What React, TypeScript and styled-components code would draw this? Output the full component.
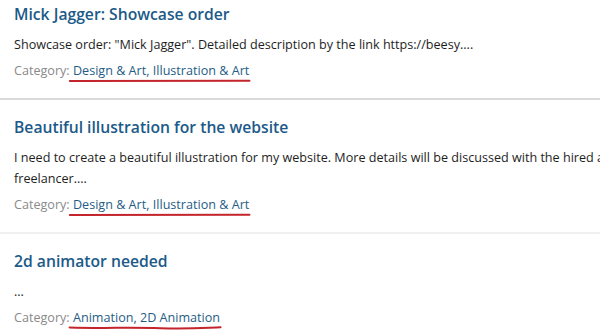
import styled, { createGlobalStyle } from 'styled-components';

const GlobalStyle = createGlobalStyle`
  html, body {
    margin: 0;
    padding: 0;
    background: #fff;
    overflow: hidden;
  }
  body {
    font-family: "Open Sans", "Liberation Sans", sans-serif;
  }
`;

type Order = {
  title: string;
  text: string;
  categories: string;
  wavy?: boolean;
};

const orders: Order[] = [
  {
    title: 'Mick Jagger: Showcase order',
    text: 'Showcase order: "Mick Jagger". Detailed description by the link https://beesy....',
    categories: 'Design & Art, Illustration & Art',
  },
  {
    title: 'Beautiful illustration for the website',
    text: 'I need to create a beautiful illustration for my website. More details will be discussed with the hired a freelancer....',
    categories: 'Design & Art, Illustration & Art',
  },
  {
    title: '2d animator needed',
    text: '...',
    categories: 'Animation, 2D Animation ',
    wavy: true,
  },
];

export default function App() {
  return (
    <>
      <GlobalStyle />
      <Page>
        <List>
          {orders.map((order, index) => (
            <Card key={order.title} $soft={index > 0}>
              <Title>{order.title}</Title>
              <Text>{order.text}</Text>
              <Meta>
                Category:{' '}
                <CategoryLink href="#">
                  {order.categories}
                  <Scribble viewBox="0 0 100 4" preserveAspectRatio="none">
                    <path
                      d={
                        order.wavy
                          ? 'M1 1.4 C 20 2.6, 40 1.2, 60 2.2 S 90 1.6, 99 1.2'
                          : 'M1 2 C 30 2.4, 60 2.2, 99 1.8'
                      }
                      stroke="#c4242b"
                      strokeWidth="2"
                      fill="none"
                      vectorEffect="non-scaling-stroke"
                      strokeLinecap="round"
                    />
                  </Scribble>
                </CategoryLink>
              </Meta>
            </Card>
          ))}
        </List>
      </Page>
    </>
  );
}

const Page = styled.div`
  width: 640px;
  height: 330px;
  overflow: hidden;
`;

const List = styled.div`
  display: flex;
  flex-direction: column;
  margin-top: -13px;
`;

const Card = styled.div<{ $soft?: boolean }>`
  padding: 15px 14px 17px 14px;
  background: #fff;
  border-bottom: 2px solid ${(p) => (p.$soft ? '#f0f0f0' : '#dadada')};
  &:last-child {
    border-bottom: none;
  }
`;

const Title = styled.h3`
  margin: 0 0 8px;
  font-size: 15.7px;
  line-height: 24px;
  font-weight: 600;
  color: #1c5a88;
`;

const Text = styled.p`
  margin: 0 0 5px;
  font-size: 12.6px;
  line-height: 21px;
  color: #1e1e1e;
`;

const Meta = styled.div`
  font-size: 12.6px;
  line-height: 21px;
  color: #8a8a8a;
`;

const CategoryLink = styled.a`
  position: relative;
  color: #1f5d85;
  text-decoration: none;
`;

const Scribble = styled.svg`
  position: absolute;
  left: -5px;
  bottom: -4px;
  width: calc(100% + 7px);
  height: 4px;
  overflow: visible;
`;
